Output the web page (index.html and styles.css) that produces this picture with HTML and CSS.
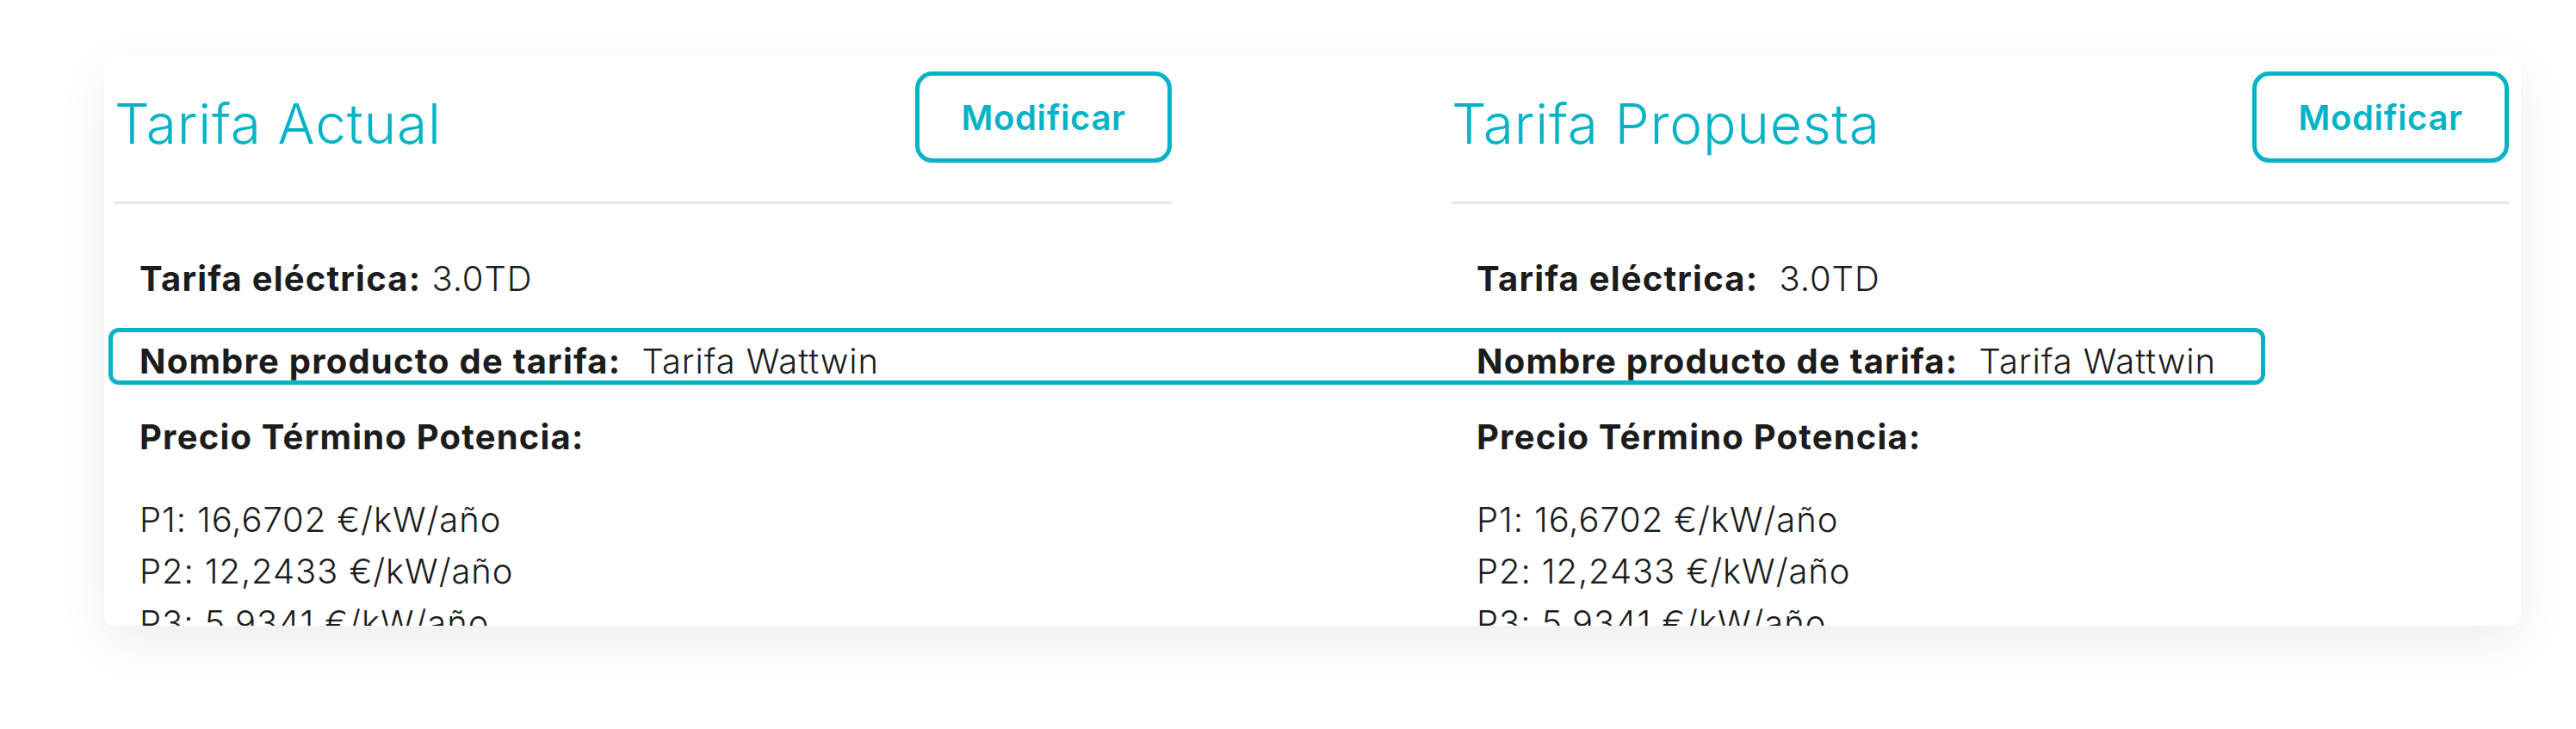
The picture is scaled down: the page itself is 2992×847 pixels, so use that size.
FILE: index.html
```html
<!DOCTYPE html>
<html lang="es">
<head>
<meta charset="utf-8">
<title>Tarifas</title>
<link rel="stylesheet" href="styles.css">
</head>
<body>
<div class="card">
  <section class="col">
    <header class="col-head">
      <h2 class="col-title">Tarifa Actual</h2>
      <button class="btn">Modificar</button>
    </header>
    <div class="col-body">
      <p class="row row-first"><b>Tarifa eléctrica:</b> 3.0TD</p>
      <p class="row row-name"><b>Nombre producto de tarifa:</b>&nbsp; Tarifa Wattwin</p>
      <p class="row row-sub"><b>Precio Término Potencia:</b></p>
      <p class="row row-list">P1: 16,6702 €/kW/año</p>
      <p class="row">P2: 12,2433 €/kW/año</p>
      <p class="row">P3: 5,9341 €/kW/año</p>
    </div>
  </section>
  <section class="col">
    <header class="col-head">
      <h2 class="col-title">Tarifa Propuesta</h2>
      <button class="btn">Modificar</button>
    </header>
    <div class="col-body">
      <p class="row row-first"><b>Tarifa eléctrica:</b>&nbsp; 3.0TD</p>
      <p class="row row-name"><b>Nombre producto de tarifa:</b>&nbsp; Tarifa Wattwin</p>
      <p class="row row-sub"><b>Precio Término Potencia:</b></p>
      <p class="row row-list">P1: 16,6702 €/kW/año</p>
      <p class="row">P2: 12,2433 €/kW/año</p>
      <p class="row">P3: 5,9341 €/kW/año</p>
    </div>
  </section>
  <div class="highlight"></div>
</div>
</body>
</html>
```
FILE: styles.css
```css
* { box-sizing: border-box; }
html, body {
  margin: 0;
  padding: 0;
  background: #ffffff;
}
body {
  font-family: "Inter", "Noto Sans", sans-serif;
  color: #1c1c1c;
  padding: 65px 0 0 121px;
  height: 847px;
  overflow: hidden;
}
.card {
  position: relative;
  width: 2807px;
  height: 662px;
  background: #ffffff;
  border-radius: 12px;
  overflow: hidden;
  box-shadow: 0 18px 56px rgba(0, 0, 0, 0.075);
  padding: 0 14px 0 12px;
  display: grid;
  grid-template-columns: 1228px 1228px;
  justify-content: space-between;
}
.col-head {
  display: flex;
  justify-content: space-between;
  align-items: flex-start;
  padding-top: 18px;
  padding-bottom: 42px;
  border-bottom: 3px solid #e6e6e6;
}
.col-title {
  margin: 13px 0 0 0;
  font-size: 64px;
  line-height: 96px;
  font-weight: 300;
  color: #06b3c6;
  letter-spacing: 0.8px;
}
.btn {
  width: 298px;
  height: 106px;
  border: 5px solid #06b3c6;
  border-radius: 20px;
  background: #ffffff;
  color: #06b3c6;
  font-family: "Inter", "Noto Sans", sans-serif;
  font-size: 40px;
  font-weight: 600;
  letter-spacing: 0.6px;
  display: flex;
  align-items: center;
  justify-content: center;
  padding: 0;
}
.col-body {
  padding-left: 29px;
}
.row {
  margin: 0;
  font-size: 40px;
  line-height: 60px;
  font-weight: 300;
  letter-spacing: 0.9px;
  white-space: nowrap;
}
.row b {
  font-weight: 700;
  letter-spacing: 1.2px;
}
.row-first { margin-top: 57px; }
.row-name { margin-top: 36px; }
.row-sub { margin-top: 28px; }
.row-list { margin-top: 36px; }
.highlight {
  position: absolute;
  left: 5px;
  top: 316px;
  width: 2505px;
  height: 66px;
  border: 5px solid #06b3c6;
  border-radius: 12px;
  pointer-events: none;
}
```
